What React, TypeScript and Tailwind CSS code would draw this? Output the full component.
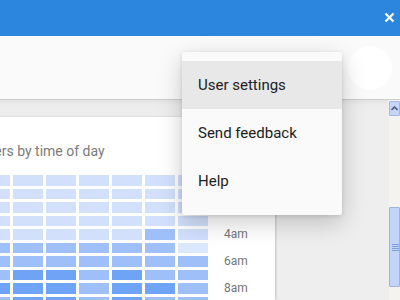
import React from "react";

const L = "bg-[#d2e0fb]";
const M = "bg-[#9fbff8]";
const D = "bg-[#6ea3f6]";
const XL = "bg-[#dbe7fc]";

// one row per hour, one column per weekday
const rows: string[][] = [
  [L, L, L, L, L, L, L],
  [L, L, L, L, L, L, L],
  [L, L, L, L, L, L, L],
  [L, L, L, L, L, L, L],
  [L, L, L, L, L, M, L],
  [M, M, M, M, M, M, XL],
  [M, M, M, M, M, M, M],
  [M, D, D, M, D, M, M],
  [D, D, D, M, D, D, M],
  [M, D, D, M, D, M, M],
];

const labels = ["12am", "", "2am", "", "4am", "", "6am", "", "8am", ""];

const menuItems = ["User settings", "Send feedback", "Help"];

const App = () => {
  return (
    <div className="relative w-[400px] h-[300px] overflow-hidden flex flex-col font-['Roboto',sans-serif] bg-[#eeeeee]">
      {/* title bar */}
      <div className="h-[36px] shrink-0 bg-[#2c86de] flex items-center justify-end pr-[5px]">
        <svg width="11" height="11" viewBox="0 0 11 11" className="mb-[2px]">
          <path d="M1.5 1.5 L9.5 9.5 M9.5 1.5 L1.5 9.5" stroke="#fff" strokeWidth="2.2" />
        </svg>
      </div>

      {/* toolbar */}
      <div className="h-[64px] shrink-0 bg-[#fafafa] border-b border-[#cdcdcd] flex items-center justify-end pr-[8px]">
        <div className="w-[44px] h-[44px] rounded-full bg-white" />
      </div>

      {/* content */}
      <div className="flex-1 flex min-h-0">
        <div className="flex-1 min-w-0 pt-[17px] bg-[linear-gradient(#e2e2e2,#ececec_5px,#eeeeee_17px)]">
          <div className="w-[315px] h-full -ml-[40px] pl-[20px] pt-[24px] bg-white shadow-[1px_0_2px_rgba(0,0,0,0.18)]">
            <p className="-ml-[2px] text-[14px] leading-[20px] text-[#7a7a7a] whitespace-nowrap">
              Users by time of day
            </p>
            <div className="mt-[14px] grid grid-cols-[repeat(7,30px)_1fr] auto-rows-[10.5px] gap-x-[3px] gap-y-[3px]">
              {rows.map((row, r) => (
                <React.Fragment key={r}>
                  {row.map((c, i) => (
                    <div key={i} className={c} />
                  ))}
                  <div className="pl-[13px] flex items-center text-[12px] leading-none text-[#757575]">
                    {labels[r]}
                  </div>
                </React.Fragment>
              ))}
            </div>
          </div>
        </div>

        {/* scrollbar */}
        <div className="w-[11px] shrink-0 ml-[1px] bg-[#f4f3ef] flex flex-col pt-[1px]">
          <div className="h-[15px] bg-[#c5d6f8] border border-[#a3b7e6] rounded-[1px] flex items-center justify-center">
            <svg width="7" height="5" viewBox="0 0 7 5">
              <path d="M0.5 4 L3.5 1 L6.5 4" fill="none" stroke="#4a5d86" strokeWidth="1.6" />
            </svg>
          </div>
          <div className="mt-[91px] h-[80px] bg-[#c2d4fa] border border-[#9fb2dd] rounded-[1px] flex flex-col items-end justify-center gap-[1px]">
            <div className="w-[7px] h-[1px] bg-[#7d9ee2]" />
            <div className="w-[7px] h-[1px] bg-[#7d9ee2]" />
            <div className="w-[7px] h-[1px] bg-[#7d9ee2]" />
            <div className="w-[7px] h-[1px] bg-[#7d9ee2]" />
          </div>
        </div>
      </div>

      {/* account menu */}
      <div className="absolute left-[182px] top-[52px] w-[160px] pt-[9px] pb-[10px] bg-[#fafafa] rounded-[2px] shadow-[0_8px_24px_rgba(0,0,0,0.2),0_1px_4px_rgba(0,0,0,0.12)]">
        {menuItems.map((item, i) => (
          <div
            key={item}
            className={
              "h-[48px] px-[16px] flex items-center text-[15px] text-[#212121] " +
              (i === 0 ? "bg-[#e8e8e8]" : "")
            }
          >
            {item}
          </div>
        ))}
      </div>
    </div>
  );
};

export default App;
